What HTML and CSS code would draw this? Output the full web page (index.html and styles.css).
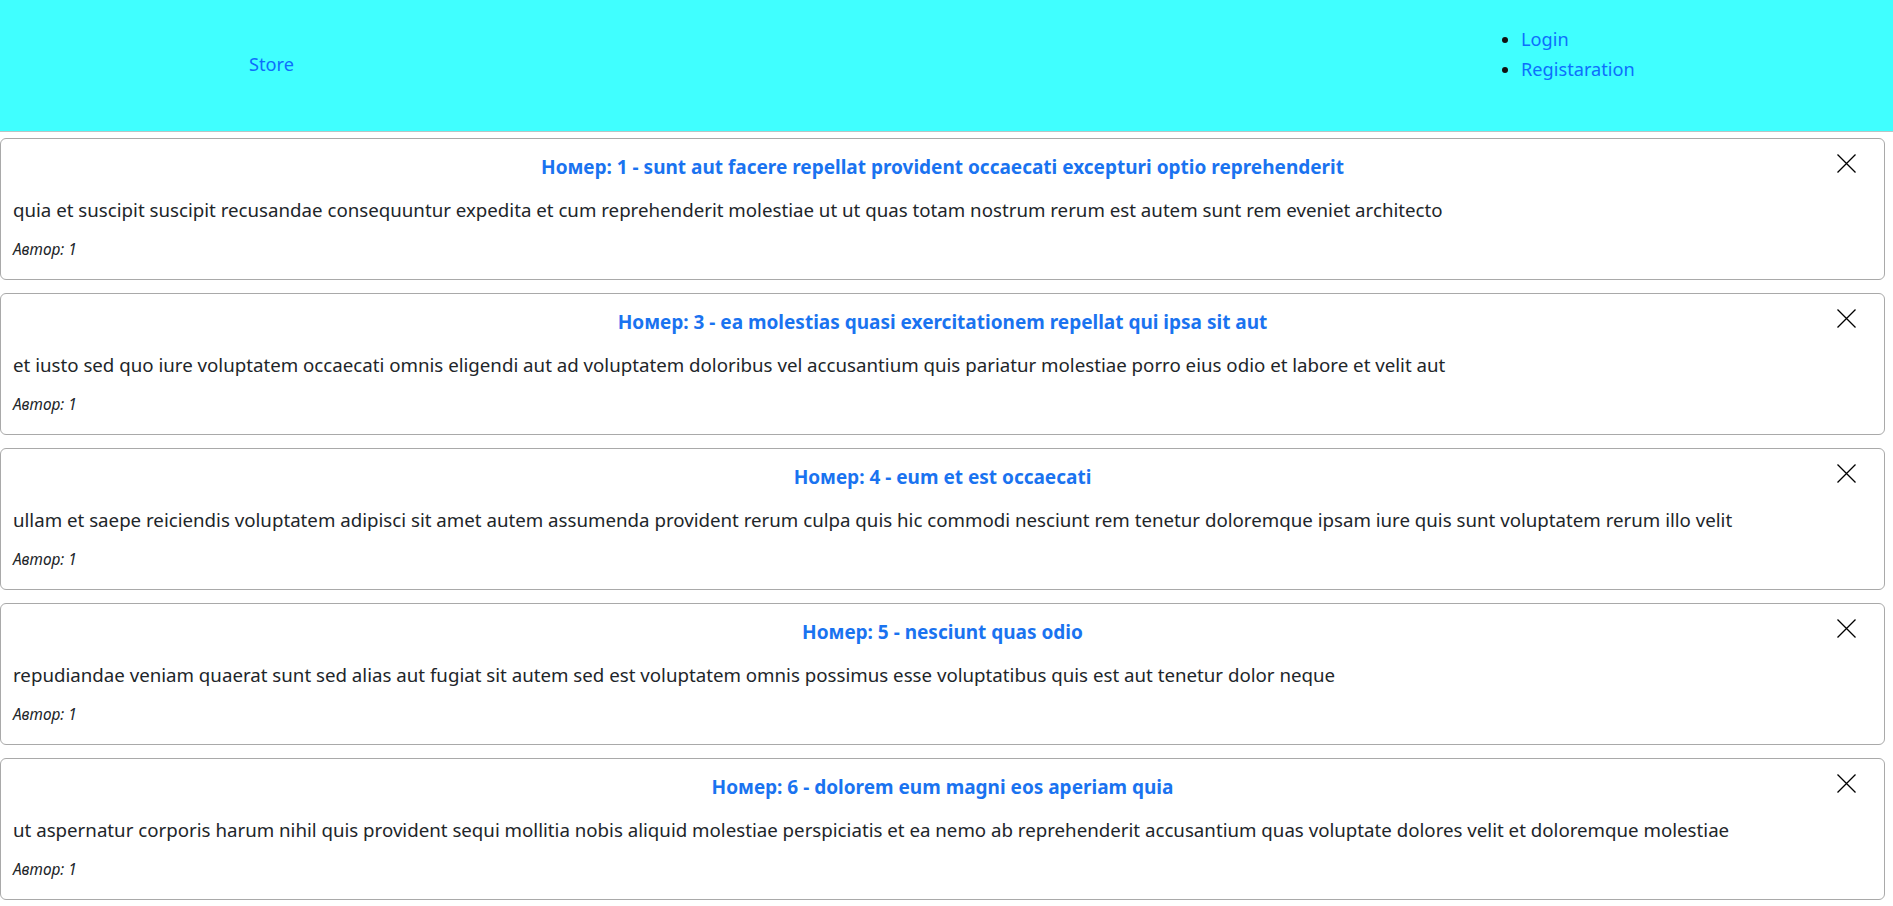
FILE: index.html
```html
<!DOCTYPE html>
<html lang="ru">
<head>
<meta charset="utf-8">
<title>Store</title>
<link rel="stylesheet" href="styles.css">
</head>
<body>
<header class="topbar">
  <a class="brand" href="#">Store</a>
  <ul class="nav-list">
    <li><a href="#">Login</a></li>
    <li><a href="#">Registaration</a></li>
  </ul>
</header>
<main class="post-list">
  <article class="post">
    <h5 class="post-title">Номер: 1 - sunt aut facere repellat provident occaecati excepturi optio reprehenderit</h5>
    <button class="close-btn" aria-label="Удалить"><svg viewBox="0 0 19 19" width="19" height="19"><path d="M0.5 0.5 L18.5 18.5 M18.5 0.5 L0.5 18.5" stroke="#000" stroke-width="1.3" fill="none"/></svg></button>
    <p class="post-body">quia et suscipit suscipit recusandae consequuntur expedita et cum reprehenderit molestiae ut ut quas totam nostrum rerum est autem sunt rem eveniet architecto</p>
    <p class="post-author">Автор: 1</p>
  </article>
  <article class="post">
    <h5 class="post-title">Номер: 3 - ea molestias quasi exercitationem repellat qui ipsa sit aut</h5>
    <button class="close-btn" aria-label="Удалить"><svg viewBox="0 0 19 19" width="19" height="19"><path d="M0.5 0.5 L18.5 18.5 M18.5 0.5 L0.5 18.5" stroke="#000" stroke-width="1.3" fill="none"/></svg></button>
    <p class="post-body">et iusto sed quo iure voluptatem occaecati omnis eligendi aut ad voluptatem doloribus vel accusantium quis pariatur molestiae porro eius odio et labore et velit aut</p>
    <p class="post-author">Автор: 1</p>
  </article>
  <article class="post">
    <h5 class="post-title">Номер: 4 - eum et est occaecati</h5>
    <button class="close-btn" aria-label="Удалить"><svg viewBox="0 0 19 19" width="19" height="19"><path d="M0.5 0.5 L18.5 18.5 M18.5 0.5 L0.5 18.5" stroke="#000" stroke-width="1.3" fill="none"/></svg></button>
    <p class="post-body">ullam et saepe reiciendis voluptatem adipisci sit amet autem assumenda provident rerum culpa quis hic commodi nesciunt rem tenetur doloremque ipsam iure quis sunt voluptatem rerum illo velit</p>
    <p class="post-author">Автор: 1</p>
  </article>
  <article class="post">
    <h5 class="post-title">Номер: 5 - nesciunt quas odio</h5>
    <button class="close-btn" aria-label="Удалить"><svg viewBox="0 0 19 19" width="19" height="19"><path d="M0.5 0.5 L18.5 18.5 M18.5 0.5 L0.5 18.5" stroke="#000" stroke-width="1.3" fill="none"/></svg></button>
    <p class="post-body">repudiandae veniam quaerat sunt sed alias aut fugiat sit autem sed est voluptatem omnis possimus esse voluptatibus quis est aut tenetur dolor neque</p>
    <p class="post-author">Автор: 1</p>
  </article>
  <article class="post">
    <h5 class="post-title">Номер: 6 - dolorem eum magni eos aperiam quia</h5>
    <button class="close-btn" aria-label="Удалить"><svg viewBox="0 0 19 19" width="19" height="19"><path d="M0.5 0.5 L18.5 18.5 M18.5 0.5 L0.5 18.5" stroke="#000" stroke-width="1.3" fill="none"/></svg></button>
    <p class="post-body">ut aspernatur corporis harum nihil quis provident sequi mollitia nobis aliquid molestiae perspiciatis et ea nemo ab reprehenderit accusantium quas voluptate dolores velit et doloremque molestiae</p>
    <p class="post-author">Автор: 1</p>
  </article>
</main>
</body>
</html>
```
FILE: styles.css
```css
* { box-sizing: border-box; }

html, body { overflow: hidden; }

body {
  margin: 0;
  font-family: "Noto Sans", "Open Sans", sans-serif;
  font-size: 18.7px;
  line-height: 28px;
  color: #212529;
  background: #fff;
}

a {
  color: #0d6efd;
  text-decoration: none;
}

.topbar {
  height: 132px;
  background: #40ffff;
  border-bottom: 1px solid #b9c4c4;
  display: grid;
  grid-template-columns: 1481px 1fr;
  align-items: center;
}

.brand {
  padding-left: 249px;
  padding-bottom: 4px;
  font-size: 18.2px;
  line-height: 30px;
}

.nav-list {
  align-self: start;
  margin: 24px 0 0;
  padding-left: 40px;
  font-size: 18.2px;
  line-height: 30px;
  color: #111;
}

.post-list {
  display: flex;
  flex-direction: column;
  gap: 13px;
  padding: 6px 8px 0 0;
}

.post {
  position: relative;
  border: 1px solid #a9a9a9;
  border-radius: 6px;
  padding: 14px 12px 18px;
  height: 142px;
}

.post-title {
  margin: 0;
  text-align: center;
  font-size: 19px;
  font-weight: 700;
  line-height: 28px;
  color: #1a73f0;
}

.close-btn {
  position: absolute;
  top: 15px;
  right: 28px;
  width: 19px;
  height: 19px;
  padding: 0;
  border: 0;
  background: transparent;
  display: block;
}

.close-btn svg { display: block; }

.post-body {
  margin: 15px 0 0;
  white-space: nowrap;
}

.post-author {
  margin: 15px 0 0;
  font-size: 15.4px;
  font-style: italic;
  line-height: 22px;
}
```
